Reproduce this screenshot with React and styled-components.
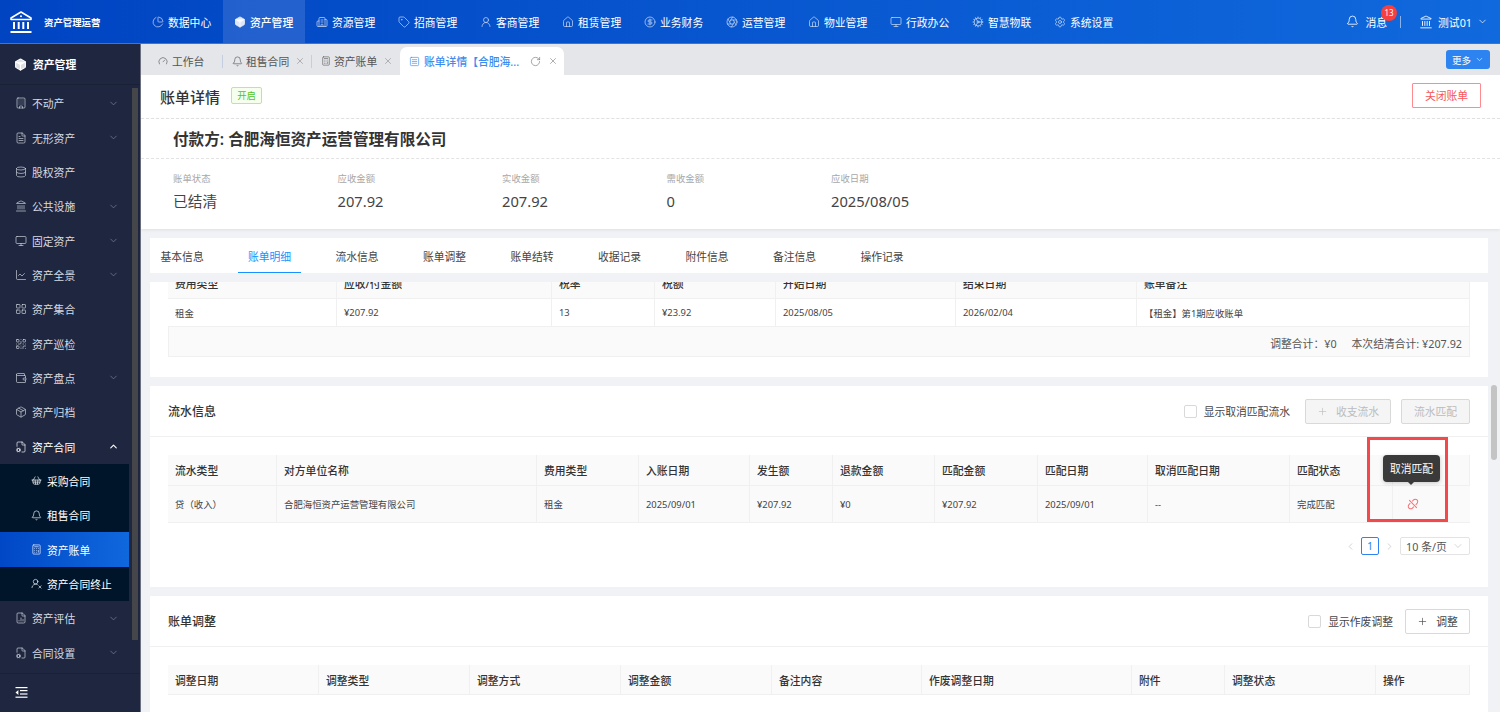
import React from "react";
import styled, { createGlobalStyle } from "styled-components";
import {
  Aperture,
  Bell,
  Box,
  Building,
  Building2,
  Calculator,
  ChartPie,
  ChevronDown,
  ChevronLeft,
  ChevronRight,
  ChevronUp,
  CircleDollarSign,
  Cog,
  Database,
  FileChartColumn,
  FileCog,
  FileText,
  Gauge,
  House,
  Landmark,
  LayoutGrid,
  LineChart,
  Monitor,
  Package,
  Plus,
  QrCode,
  RotateCw,
  Settings,
  ShoppingBasket,
  SquareMenu,
  Tag,
  UserRound,
  UserRoundX,
  Wallet,
  X,
} from "lucide-react";
import { AiOutlineDisconnect } from "react-icons/ai";

const GlobalStyle = createGlobalStyle`
  * { box-sizing: border-box; }
  html, body { margin: 0; padding: 0; height: 100%; overflow: hidden; }
  body {
    font-family: "Noto Sans", "Noto Sans CJK SC", sans-serif;
    font-size: 10.8px;
    color: #333;
  }
`;

const navItems = [
  ["数据中心", ChartPie],
  ["资产管理", Box, true],
  ["资源管理", Building2],
  ["招商管理", Tag],
  ["客商管理", UserRound],
  ["租赁管理", House],
  ["业务财务", CircleDollarSign],
  ["运营管理", Aperture],
  ["物业管理", House],
  ["行政办公", Monitor],
  ["智慧物联", Cog],
  ["系统设置", Settings],
];

const menuItems = [
  ["不动产", Building, "down"],
  ["无形资产", FileText, "down"],
  ["股权资产", Database],
  ["公共设施", Landmark, "down"],
  ["固定资产", Monitor, "down"],
  ["资产全景", LineChart, "down"],
  ["资产集合", LayoutGrid],
  ["资产巡检", QrCode],
  ["资产盘点", Wallet, "down"],
  ["资产归档", Package],
  ["资产合同", FileCog, "up"],
];

const subItems = [
  ["采购合同", ShoppingBasket],
  ["租售合同", Bell],
  ["资产账单", Calculator, true],
  ["资产合同终止", UserRoundX],
];

const stats = [
  ["账单状态", "已结清"],
  ["应收金额", "207.92"],
  ["实收金额", "207.92"],
  ["需收金额", "0"],
  ["应收日期", "2025/08/05"],
];

const detailTabs = ["基本信息", "账单明细", "流水信息", "账单调整", "账单结转", "收据记录", "附件信息", "备注信息", "操作记录"];

const billCols = "169px 215px 103px 121px 180px 181px 333px";
const flowCols = "109px 260px 102px 111px 83px 102px 103px 110px 142px 103px 77px";
const adjustCols = "151px 151px 151px 151px 150px 210px 93px 151px 94px";

const BankLogo = () => (
  <svg width="24" height="24" viewBox="0 0 24 24" fill="none" stroke="#fff">
    <path d="M12 2 L22 8 V9.5 H2 V8 Z" strokeWidth="1.6" strokeLinejoin="round" />
    <circle cx="12" cy="6.2" r="1" fill="#fff" stroke="none" />
    <path d="M5 12 V19 M9.7 12 V19 M14.3 12 V19 M19 12 V19" strokeWidth="2" />
    <path d="M1.5 22 H22.5" strokeWidth="2" />
  </svg>
);

const CollapseIcon = () => (
  <svg width="13" height="13" viewBox="0 0 13 13" fill="#fff">
    <rect x="0.5" y="1" width="12" height="1.2" />
    <rect x="5" y="4" width="7.5" height="1.2" />
    <rect x="5" y="7.4" width="7.5" height="1.2" />
    <rect x="0.5" y="10.6" width="12" height="1.2" />
    <path d="M3.4 4 V9 L0.5 6.5 Z" />
  </svg>
);

const App = () => {
  return (
    <>
      <GlobalStyle />
      <Page>
        <TopBar>
          <Brand>
            <BankLogo />
            <span>资产管理运营</span>
          </Brand>
          <Nav>
            {navItems.map(([name, Icon, active]) => (
              <NavItem key={name} $active={active}>
                <Icon size={12} strokeWidth={1.4} fill={active ? "rgba(255,255,255,0.85)" : "none"} />
                {name}
              </NavItem>
            ))}
          </Nav>
          <UserArea>
            <Message>
              <Bell size={13} strokeWidth={1.5} />
              消息
              <Badge>13</Badge>
            </Message>
            <UserDivider />
            <UserName>
              <Landmark size={14} strokeWidth={1.5} />
              测试01
              <ChevronDown size={11} strokeWidth={1.5} />
            </UserName>
          </UserArea>
        </TopBar>
        <Body>
          <Sidebar>
            <SideTitle>
              <Box size={13} strokeWidth={2} fill="rgba(255,255,255,0.85)" />
              资产管理
            </SideTitle>
            <SideScroll>
              <SideMenu>
                {menuItems.map(([name, Icon, arrow]) => (
                  <MenuRow key={name} $open={arrow === "up"}>
                    <Icon size={12} strokeWidth={1.3} />
                    <span>{name}</span>
                    {arrow === "down" && <ChevronDown size={11} strokeWidth={1.5} color="#7d8496" />}
                    {arrow === "up" && <ChevronUp size={11} strokeWidth={2.4} color="#fff" />}
                  </MenuRow>
                ))}
                <SubMenu>
                  {subItems.map(([name, Icon, active]) => (
                    <SubRow key={name} $active={active}>
                      <Icon size={11} strokeWidth={1.4} />
                      <span>{name}</span>
                    </SubRow>
                  ))}
                </SubMenu>
                <MenuRow>
                  <FileChartColumn size={12} strokeWidth={1.3} />
                  <span>资产评估</span>
                  <ChevronDown size={11} strokeWidth={1.5} color="#7d8496" />
                </MenuRow>
                <MenuRow>
                  <FileCog size={12} strokeWidth={1.3} />
                  <span>合同设置</span>
                  <ChevronDown size={11} strokeWidth={1.5} color="#7d8496" />
                </MenuRow>
              </SideMenu>
              <SideThumb />
            </SideScroll>
            <SideFooter>
              <CollapseIcon />
            </SideFooter>
          </Sidebar>
          <Main>
            <TabStrip>
              <PageTab $width={73}>
                <Gauge size={10} strokeWidth={1.5} />
                <TabText $left={1}>工作台</TabText>
              </PageTab>
              <PageTab $width={89} $divider>
                <Bell size={11} strokeWidth={1.4} />
                <TabText>租售合同</TabText>
                <X size={10} strokeWidth={1.4} color="#888" />
              </PageTab>
              <PageTab $width={89} $divider>
                <Calculator size={10} strokeWidth={1.4} />
                <TabText>资产账单</TabText>
                <X size={10} strokeWidth={1.4} color="#888" />
              </PageTab>
              <ActiveTab>
                <SquareMenu size={11} strokeWidth={1.4} />
                <span>账单详情【合肥海...</span>
                <RotateCw size={11} strokeWidth={1.4} color="#777" />
                <X size={10} strokeWidth={1.4} color="#777" />
              </ActiveTab>
              <MoreButton>
                更多
                <ChevronDown size={9} strokeWidth={1.6} />
              </MoreButton>
            </TabStrip>
            <PageHead>
              <PageTitle>账单详情</PageTitle>
              <StatusTag>开启</StatusTag>
              <CloseButton>关闭账单</CloseButton>
            </PageHead>
            <Summary>
              <Payer>付款方: 合肥海恒资产运营管理有限公司</Payer>
              <StatRow>
                {stats.map(([label, value]) => (
                  <Stat key={label}>
                    <label>{label}</label>
                    <strong>{value}</strong>
                  </Stat>
                ))}
              </StatRow>
            </Summary>
            <Content>
              <Scroller>
                <DetailTabs>
                  {detailTabs.map((tab) => (
                    <DetailTab key={tab} $active={tab === "账单明细"}>
                      {tab}
                    </DetailTab>
                  ))}
                </DetailTabs>
                <BillCard>
                  <Table>
                    <ClippedHead $cols={billCols}>
                      {["费用类型", "应收/付金额", "税率", "税额", "开始日期", "结束日期", "账单备注"].map((h) => (
                        <HeadCell key={h}>{h}</HeadCell>
                      ))}
                    </ClippedHead>
                    <BodyRow $cols={billCols} $height={28}>
                      {["租金", "¥207.92", "13", "¥23.92", "2025/08/05", "2026/02/04", "【租金】第1期应收账单"].map((c) => (
                        <BodyCell key={c}>{c}</BodyCell>
                      ))}
                    </BodyRow>
                    <TotalRow>
                      <span>调整合计：¥0</span>
                      <span>本次结清合计: ¥207.92</span>
                    </TotalRow>
                  </Table>
                </BillCard>
                <Card $height={201}>
                  <CardHead>
                    <CardTitle>流水信息</CardTitle>
                    <CheckLabel $space={5}>
                      <CheckBox />
                      显示取消匹配流水
                    </CheckLabel>
                    <ToolButton $disabled $width={86}>
                      <Plus size={11} strokeWidth={1.4} />
                      收支流水
                    </ToolButton>
                    <ToolButton $disabled $width={69}>
                      流水匹配
                    </ToolButton>
                  </CardHead>
                  <CardBody>
                    <Table>
                      <HeadRow $cols={flowCols} $height={31}>
                        {["流水类型", "对方单位名称", "费用类型", "入账日期", "发生额", "退款金额", "匹配金额", "匹配日期", "取消匹配日期", "匹配状态", "操作"].map((h) => (
                          <HeadCell key={h}>{h}</HeadCell>
                        ))}
                      </HeadRow>
                      <BodyRow $cols={flowCols} $height={37} $shade>
                        {["贷（收入）", "合肥海恒资产运营管理有限公司", "租金", "2025/09/01", "¥207.92", "¥0", "¥207.92", "2025/09/01", "--", "完成匹配"].map((c, i) => (
                          <BodyCell key={i}>{c}</BodyCell>
                        ))}
                        <ActionCell>
                          <AiOutlineDisconnect size={14} />
                        </ActionCell>
                      </BodyRow>
                    </Table>
                    <Pager>
                      <ChevronLeft size={11} strokeWidth={1.4} color="#bbb" />
                      <PageNum>1</PageNum>
                      <ChevronRight size={11} strokeWidth={1.4} color="#bbb" />
                      <PageSize>
                        10 条/页
                        <ChevronDown size={12} strokeWidth={1.2} color="#bbb" />
                      </PageSize>
                    </Pager>
                    <Highlight />
                    <Tooltip>取消匹配</Tooltip>
                  </CardBody>
                </Card>
                <Card $height={116}>
                  <CardHead>
                    <CardTitle>账单调整</CardTitle>
                    <CheckLabel $space={2}>
                      <CheckBox />
                      显示作废调整
                    </CheckLabel>
                    <ToolButton $width={65}>
                      <Plus size={11} strokeWidth={1.4} />
                      调整
                    </ToolButton>
                  </CardHead>
                  <CardBody>
                    <Table>
                      <HeadRow $cols={adjustCols} $height={30}>
                        {["调整日期", "调整类型", "调整方式", "调整金额", "备注内容", "作废调整日期", "附件", "调整状态", "操作"].map((h) => (
                          <HeadCell key={h}>{h}</HeadCell>
                        ))}
                      </HeadRow>
                    </Table>
                  </CardBody>
                </Card>
              </Scroller>
              <ScrollTrack>
                <ScrollThumb />
              </ScrollTrack>
            </Content>
          </Main>
        </Body>
      </Page>
    </>
  );
};

const Page = styled.div`
  width: 1500px;
  height: 712px;
  display: flex;
  flex-direction: column;
  overflow: hidden;
`;

const TopBar = styled.header`
  height: 44px;
  flex: none;
  display: flex;
  align-items: stretch;
  color: #fff;
  background: linear-gradient(90deg, #0044c2 0%, #1069dd 100%);
  border-bottom: 1px solid #2a7be6;
`;

const Brand = styled.div`
  width: 141px;
  flex: none;
  display: flex;
  align-items: center;
  gap: 11px;
  padding-left: 9px;
  font-size: 9.4px;
  font-weight: 700;
  white-space: nowrap;
`;

const Nav = styled.nav`
  display: flex;
  align-items: stretch;
`;

const NavItem = styled.div`
  width: 82px;
  display: flex;
  align-items: center;
  gap: 4px;
  padding-left: 11px;
  font-size: 10.8px;
  white-space: nowrap;
  background: ${(p) => (p.$active ? "rgba(255, 255, 255, 0.13)" : "transparent")};
  font-weight: ${(p) => (p.$active ? 500 : 400)};

  svg {
    opacity: ${(p) => (p.$active ? 1 : 0.8)};
  }
`;

const UserArea = styled.div`
  margin-left: auto;
  display: flex;
  align-items: center;
  padding-right: 12px;
`;

const Message = styled.div`
  position: relative;
  display: flex;
  align-items: center;
  gap: 6px;
  padding-right: 13px;
`;

const Badge = styled.span`
  position: absolute;
  top: -9px;
  right: 3px;
  width: 16px;
  height: 16px;
  border-radius: 50%;
  background: #f5403f;
  font-size: 8px;
  line-height: 16px;
  text-align: center;
`;

const UserDivider = styled.i`
  width: 1px;
  height: 12px;
  background: rgba(255, 255, 255, 0.5);
`;

const UserName = styled.div`
  display: flex;
  align-items: center;
  gap: 5px;
  padding-left: 18px;
`;

const Body = styled.div`
  flex: 1;
  min-height: 0;
  display: flex;
`;

const Sidebar = styled.aside`
  width: 141px;
  flex: none;
  display: flex;
  flex-direction: column;
  background: #1f2740;
  color: #d6dae2;
  border-right: 1px solid #6b7080;
`;

const SideTitle = styled.div`
  height: 41px;
  flex: none;
  display: flex;
  align-items: center;
  gap: 6px;
  padding-left: 14px;
  color: #fff;
  font-weight: 700;
  border-bottom: 1px solid #1a2136;
`;

const SideScroll = styled.div`
  position: relative;
  flex: 1;
  min-height: 0;
  overflow: hidden;
`;

const SideMenu = styled.div`
  width: 129px;
  padding-top: 1px;
`;

const SideThumb = styled.i`
  position: absolute;
  top: 3px;
  right: 2px;
  width: 6px;
  height: 552px;
  background: #45464a;
`;

const MenuRow = styled.div`
  height: 34.35px;
  display: flex;
  align-items: center;
  gap: 5px;
  padding: 0 10px 0 15px;
  color: ${(p) => (p.$open ? "#fff" : "#d6dae2")};

  span {
    flex: 1;
  }
`;

const SubMenu = styled.div`
  background: #001529;
`;

const SubRow = styled.div`
  height: 34.35px;
  display: flex;
  align-items: center;
  gap: 5px;
  padding-left: 31px;
  color: #fff;
  white-space: nowrap;
  background: ${(p) => (p.$active ? "linear-gradient(90deg, #0047c6, #1068dd)" : "transparent")};
`;

const SideFooter = styled.div`
  height: 39px;
  flex: none;
  display: flex;
  align-items: center;
  padding: 0 0 2px 15px;
  border-top: 1px solid #1a2136;
`;

const Main = styled.main`
  flex: 1;
  min-width: 0;
  display: flex;
  flex-direction: column;
  background: #f0f2f5;
`;

const TabStrip = styled.div`
  position: relative;
  height: 31px;
  flex: none;
  display: flex;
  align-items: flex-end;
  background: #e4e6e9;
  padding-left: 8px;
`;

const PageTab = styled.div`
  position: relative;
  width: ${(p) => p.$width}px;
  height: 28px;
  flex: none;
  display: flex;
  align-items: center;
  gap: 3px;
  padding-left: ${(p) => (p.$divider ? 10 : 9)}px;
  color: #555;
  white-space: nowrap;

  &::before {
    content: "";
    display: ${(p) => (p.$divider ? "block" : "none")};
    position: absolute;
    left: 0;
    top: 8px;
    height: 13px;
    width: 1px;
    background: #c3cfe0;
  }
`;

const TabText = styled.span`
  margin: 0 3px 0 ${(p) => p.$left || 0}px;
`;

const ActiveTab = styled.div`
  width: 164px;
  height: 28px;
  flex: none;
  display: flex;
  align-items: center;
  gap: 4px;
  padding-left: 9px;
  background: #fff;
  border-radius: 7px 7px 0 0;
  color: #3b8cf0;

  span {
    width: 102px;
    white-space: nowrap;
    font-weight: 500;
  }

  svg:last-child {
    margin-left: 3px;
  }
`;

const MoreButton = styled.div`
  position: absolute;
  top: 6px;
  right: 10px;
  width: 44px;
  height: 19px;
  display: flex;
  align-items: center;
  justify-content: center;
  gap: 4px;
  border-radius: 3px;
  background: #2d84f0;
  color: #fff;
  font-size: 9.5px;
`;

const PageHead = styled.div`
  height: 44px;
  flex: none;
  display: flex;
  align-items: center;
  gap: 11px;
  padding: 0 19px;
  background: #fff;
  border-bottom: 1px dashed #e3e3e3;
`;

const PageTitle = styled.div`
  font-size: 15px;
  font-weight: 500;
  color: #333;
  margin-top: -1px;
`;

const StatusTag = styled.div`
  width: 31px;
  height: 17px;
  margin-top: -2px;
  border: 1px solid #b7eb8f;
  background: #f6ffed;
  color: #52c41a;
  border-radius: 2px;
  font-size: 9.4px;
  line-height: 15px;
  text-align: center;
`;

const CloseButton = styled.div`
  width: 69px;
  height: 25px;
  margin-left: auto;
  margin-top: -3px;
  border: 1px solid #ff8a8f;
  color: #f5565c;
  line-height: 23px;
  text-align: center;
  border-radius: 1px;
`;

const Summary = styled.section`
  height: 110px;
  flex: none;
  background: #fff;
  box-shadow: 0 1px 3px rgba(0, 0, 0, 0.08);
  position: relative;
`;

const Payer = styled.div`
  height: 40px;
  display: flex;
  align-items: center;
  padding-left: 32px;
  font-size: 15.6px;
  font-weight: 600;
  color: #333;
  border-bottom: 1px dashed #e3e3e3;
`;

const StatRow = styled.div`
  display: flex;
  padding: 13px 0 0 32px;
`;

const Stat = styled.div`
  width: 164.5px;
  display: flex;
  flex-direction: column;
  gap: 4px;

  label {
    font-size: 9.4px;
    color: #a8a8a8;
    line-height: 14px;
  }

  strong {
    font-size: 14.7px;
    font-weight: 400;
    color: #444;
    line-height: 22px;
  }
`;

const Content = styled.div`
  flex: 1;
  min-height: 0;
  display: flex;
`;

const Scroller = styled.div`
  flex: 1;
  min-width: 0;
  padding: 9px 0 0 9px;
  display: flex;
  flex-direction: column;
  gap: 9px;
  overflow: hidden;
`;

const DetailTabs = styled.div`
  width: 1340px;
  height: 35px;
  flex: none;
  display: flex;
  align-items: stretch;
  background: #fff;
  gap: 44.3px;
  padding-left: 10.5px;
`;

const DetailTab = styled.div`
  position: relative;
  display: flex;
  align-items: center;
  color: ${(p) => (p.$active ? "#1890ff" : "#444")};

  &::after {
    content: "";
    display: ${(p) => (p.$active ? "block" : "none")};
    position: absolute;
    left: -10px;
    right: -10px;
    bottom: 0;
    height: 1px;
    background: #1890ff;
  }
`;

const Card = styled.section`
  position: relative;
  width: 1338px;
  height: ${(p) => p.$height}px;
  flex: none;
  background: #fff;
`;

const BillCard = styled(Card)`
  height: 95px;
  padding: 0 18px;
`;

const CardHead = styled.div`
  height: 51px;
  display: flex;
  align-items: center;
  gap: 10px;
  padding: 0 18px;
  border-bottom: 1px solid #f0f0f0;
`;

const CardTitle = styled.div`
  margin-right: auto;
  font-size: 12px;
  font-weight: 500;
  color: #333;
`;

const CheckLabel = styled.label`
  display: flex;
  align-items: center;
  gap: 7px;
  margin-right: ${(p) => p.$space}px;
  color: #444;
`;

const CheckBox = styled.i`
  width: 13px;
  height: 13px;
  background: #fff;
  border: 1px solid #d9d9d9;
  border-radius: 2px;
`;

const ToolButton = styled.div`
  width: ${(p) => p.$width}px;
  height: 25px;
  display: flex;
  align-items: center;
  justify-content: center;
  gap: 8px;
  border: 1px solid #d9d9d9;
  border-radius: 2px;
  background: ${(p) => (p.$disabled ? "#f5f5f5" : "#fff")};
  color: ${(p) => (p.$disabled ? "#bcbcbc" : "#444")};
`;

const CardBody = styled.div`
  padding: 18px 18px 0;
`;

const Table = styled.div`
  width: 1302px;
`;

const Row = styled.div`
  display: grid;
  grid-template-columns: ${(p) => p.$cols};
  height: ${(p) => p.$height}px;
  border-bottom: 1px solid #f0f0f0;
`;

const HeadRow = styled(Row)`
  background: #fafafa;
`;

/* the table is scrolled under the tab bar, only the lower part of its head shows */
const ClippedHead = styled(HeadRow)`
  height: 17px;
  overflow: hidden;
  grid-template-rows: 17px;

  & > div {
    height: 31px;
    margin-top: -15px;
  }
`;

const BodyRow = styled(Row)`
  background: ${(p) => (p.$shade ? "#fafafa" : "#fff")};
`;

const HeadCell = styled.div`
  display: flex;
  align-items: center;
  padding-left: 7px;
  font-weight: 500;
  font-size: 10.8px;
  color: #333;
  border-right: 1px solid #f0f0f0;
`;

const BodyCell = styled.div`
  display: flex;
  align-items: center;
  padding-left: 7px;
  font-size: 9.4px;
  color: #444;
  border-right: 1px solid #f0f0f0;
  white-space: nowrap;
`;

const ActionCell = styled(BodyCell)`
  color: #ff6b70;
  border-right: 0;
  padding-left: 13px;
`;

const TotalRow = styled.div`
  height: 30px;
  display: flex;
  align-items: center;
  justify-content: flex-end;
  gap: 15px;
  padding: 2px 7px 0 0;
  background: #fafafa;
  border: 1px solid #f0f0f0;
  border-top: 0;
  font-size: 10.8px;
  color: #555;
`;

const Pager = styled.div`
  display: flex;
  align-items: center;
  justify-content: flex-end;
  gap: 4px;
  margin-top: 14px;
`;

const PageNum = styled.div`
  width: 18px;
  height: 18px;
  border: 1px solid #2d84f0;
  border-radius: 2px;
  color: #2d84f0;
  line-height: 16px;
  text-align: center;
  margin: 0 1px;
`;

const PageSize = styled.div`
  width: 70px;
  height: 18px;
  margin-left: 1px;
  display: flex;
  align-items: center;
  justify-content: space-between;
  padding: 0 5px;
  border: 1px solid #e3e3e3;
  color: #555;
  border-radius: 2px;
`;

const Highlight = styled.div`
  position: absolute;
  left: 1217px;
  top: 51px;
  width: 81px;
  height: 85px;
  border: 3px solid #f5484c;
`;

const Tooltip = styled.div`
  position: absolute;
  left: 1233px;
  top: 69px;
  width: 57px;
  height: 27px;
  background: #3a3a3a;
  color: #fff;
  border-radius: 4px;
  line-height: 27px;
  text-align: center;
  box-shadow: 0 1px 4px rgba(0, 0, 0, 0.2);

  &::after {
    content: "";
    position: absolute;
    left: 25px;
    bottom: -3px;
    border: 3px solid transparent;
    border-bottom: 0;
    border-top-color: #3a3a3a;
  }
`;

const ScrollTrack = styled.div`
  width: 12px;
  flex: none;
  padding: 156px 3px 0 3px;
`;

const ScrollThumb = styled.div`
  width: 6px;
  height: 75px;
  border-radius: 3px;
  background: #c4c4c4;
`;

export default App;
